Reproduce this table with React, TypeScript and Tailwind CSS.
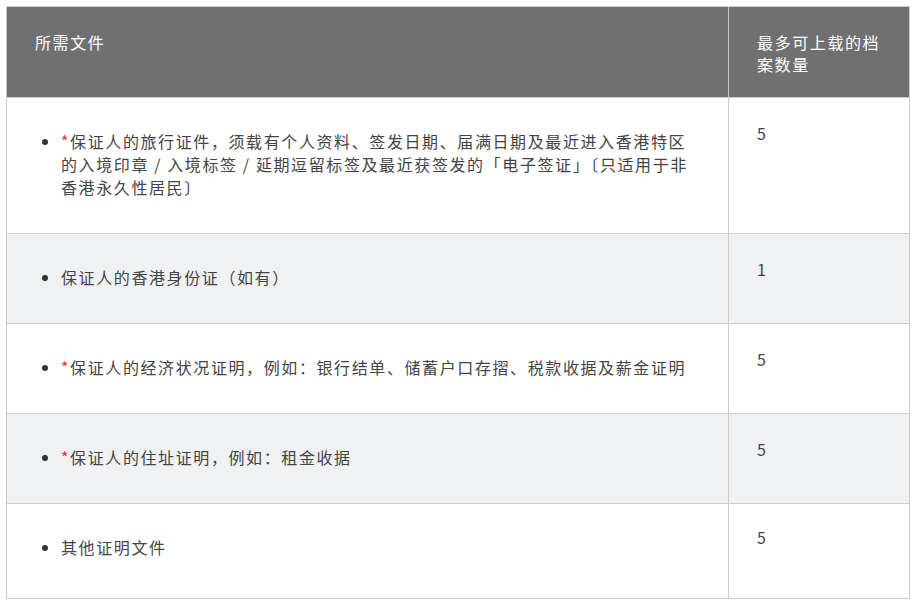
import React from "react";

const rows: { req: boolean; text: string; n: string; grey: boolean }[] = [
  {
    req: true,
    text: "保证人的旅行证件，须载有个人资料、签发日期、届满日期及最近进入香港特区的入境印章 / 入境标签 / 延期逗留标签及最近获签发的「电子签证」〔只适用于非香港永久性居民〕",
    n: "5",
    grey: false,
  },
  { req: false, text: "保证人的香港身份证（如有）", n: "1", grey: true },
  {
    req: true,
    text: "保证人的经济状况证明，例如：银行结单、储蓄户口存摺、税款收据及薪金证明",
    n: "5",
    grey: false,
  },
  { req: true, text: "保证人的住址证明，例如：租金收据", n: "5", grey: true },
  { req: false, text: "其他证明文件", n: "5", grey: false },
];

export default function App() {
  return (
    <div
      className="bg-white w-[918px] h-[609px] pt-[6px] pl-[6px]"
      style={{ fontFamily: '"Noto Sans CJK SC", "Noto Sans", sans-serif' }}
    >
      <table className="border-collapse w-[903px] table-fixed text-[16px] leading-[23px] tracking-[1.6px]">
        <colgroup>
          <col className="w-[722px]" />
          <col className="w-[181px]" />
        </colgroup>
        <thead>
          <tr className="bg-[#707070] text-white">
            <th className="border border-[#cccccc] px-[28px] pt-[24px] pb-[22px] text-left align-top font-normal leading-[22px]">
              所需文件
            </th>
            <th className="border border-[#cccccc] px-[28px] pt-[24px] pb-[22px] text-left align-top font-normal leading-[22px]">
              最多可上载的档案数量
            </th>
          </tr>
        </thead>
        <tbody>
          {rows.map((r, i) => {
            const last = i === rows.length - 1;
            return (
              <tr key={i} className={r.grey ? "bg-[#f0f1f3]" : "bg-white"}>
                <td
                  className={
                    last
                      ? "border border-[#cccccc] px-[28px] pt-[24px] pb-[29px] align-top text-[#444444]"
                      : "border border-[#cccccc] px-[28px] py-[24px] align-top text-[#444444]"
                  }
                >
                  <ul className="list-disc pl-[26px] mt-[8px] mb-[10px]">
                    <li className="marker:text-[#333333]">
                      {r.req && <span className="text-[#e0332e]">*</span>}
                      {r.text}
                    </li>
                  </ul>
                </td>
                <td
                  className={
                    last
                      ? "border border-[#cccccc] px-[28px] pt-[22px] pb-[29px] align-top text-[#444444]"
                      : "border border-[#cccccc] px-[28px] py-[24px] align-top text-[#444444]"
                  }
                >
                  {r.n}
                </td>
              </tr>
            );
          })}
        </tbody>
      </table>
    </div>
  );
}
